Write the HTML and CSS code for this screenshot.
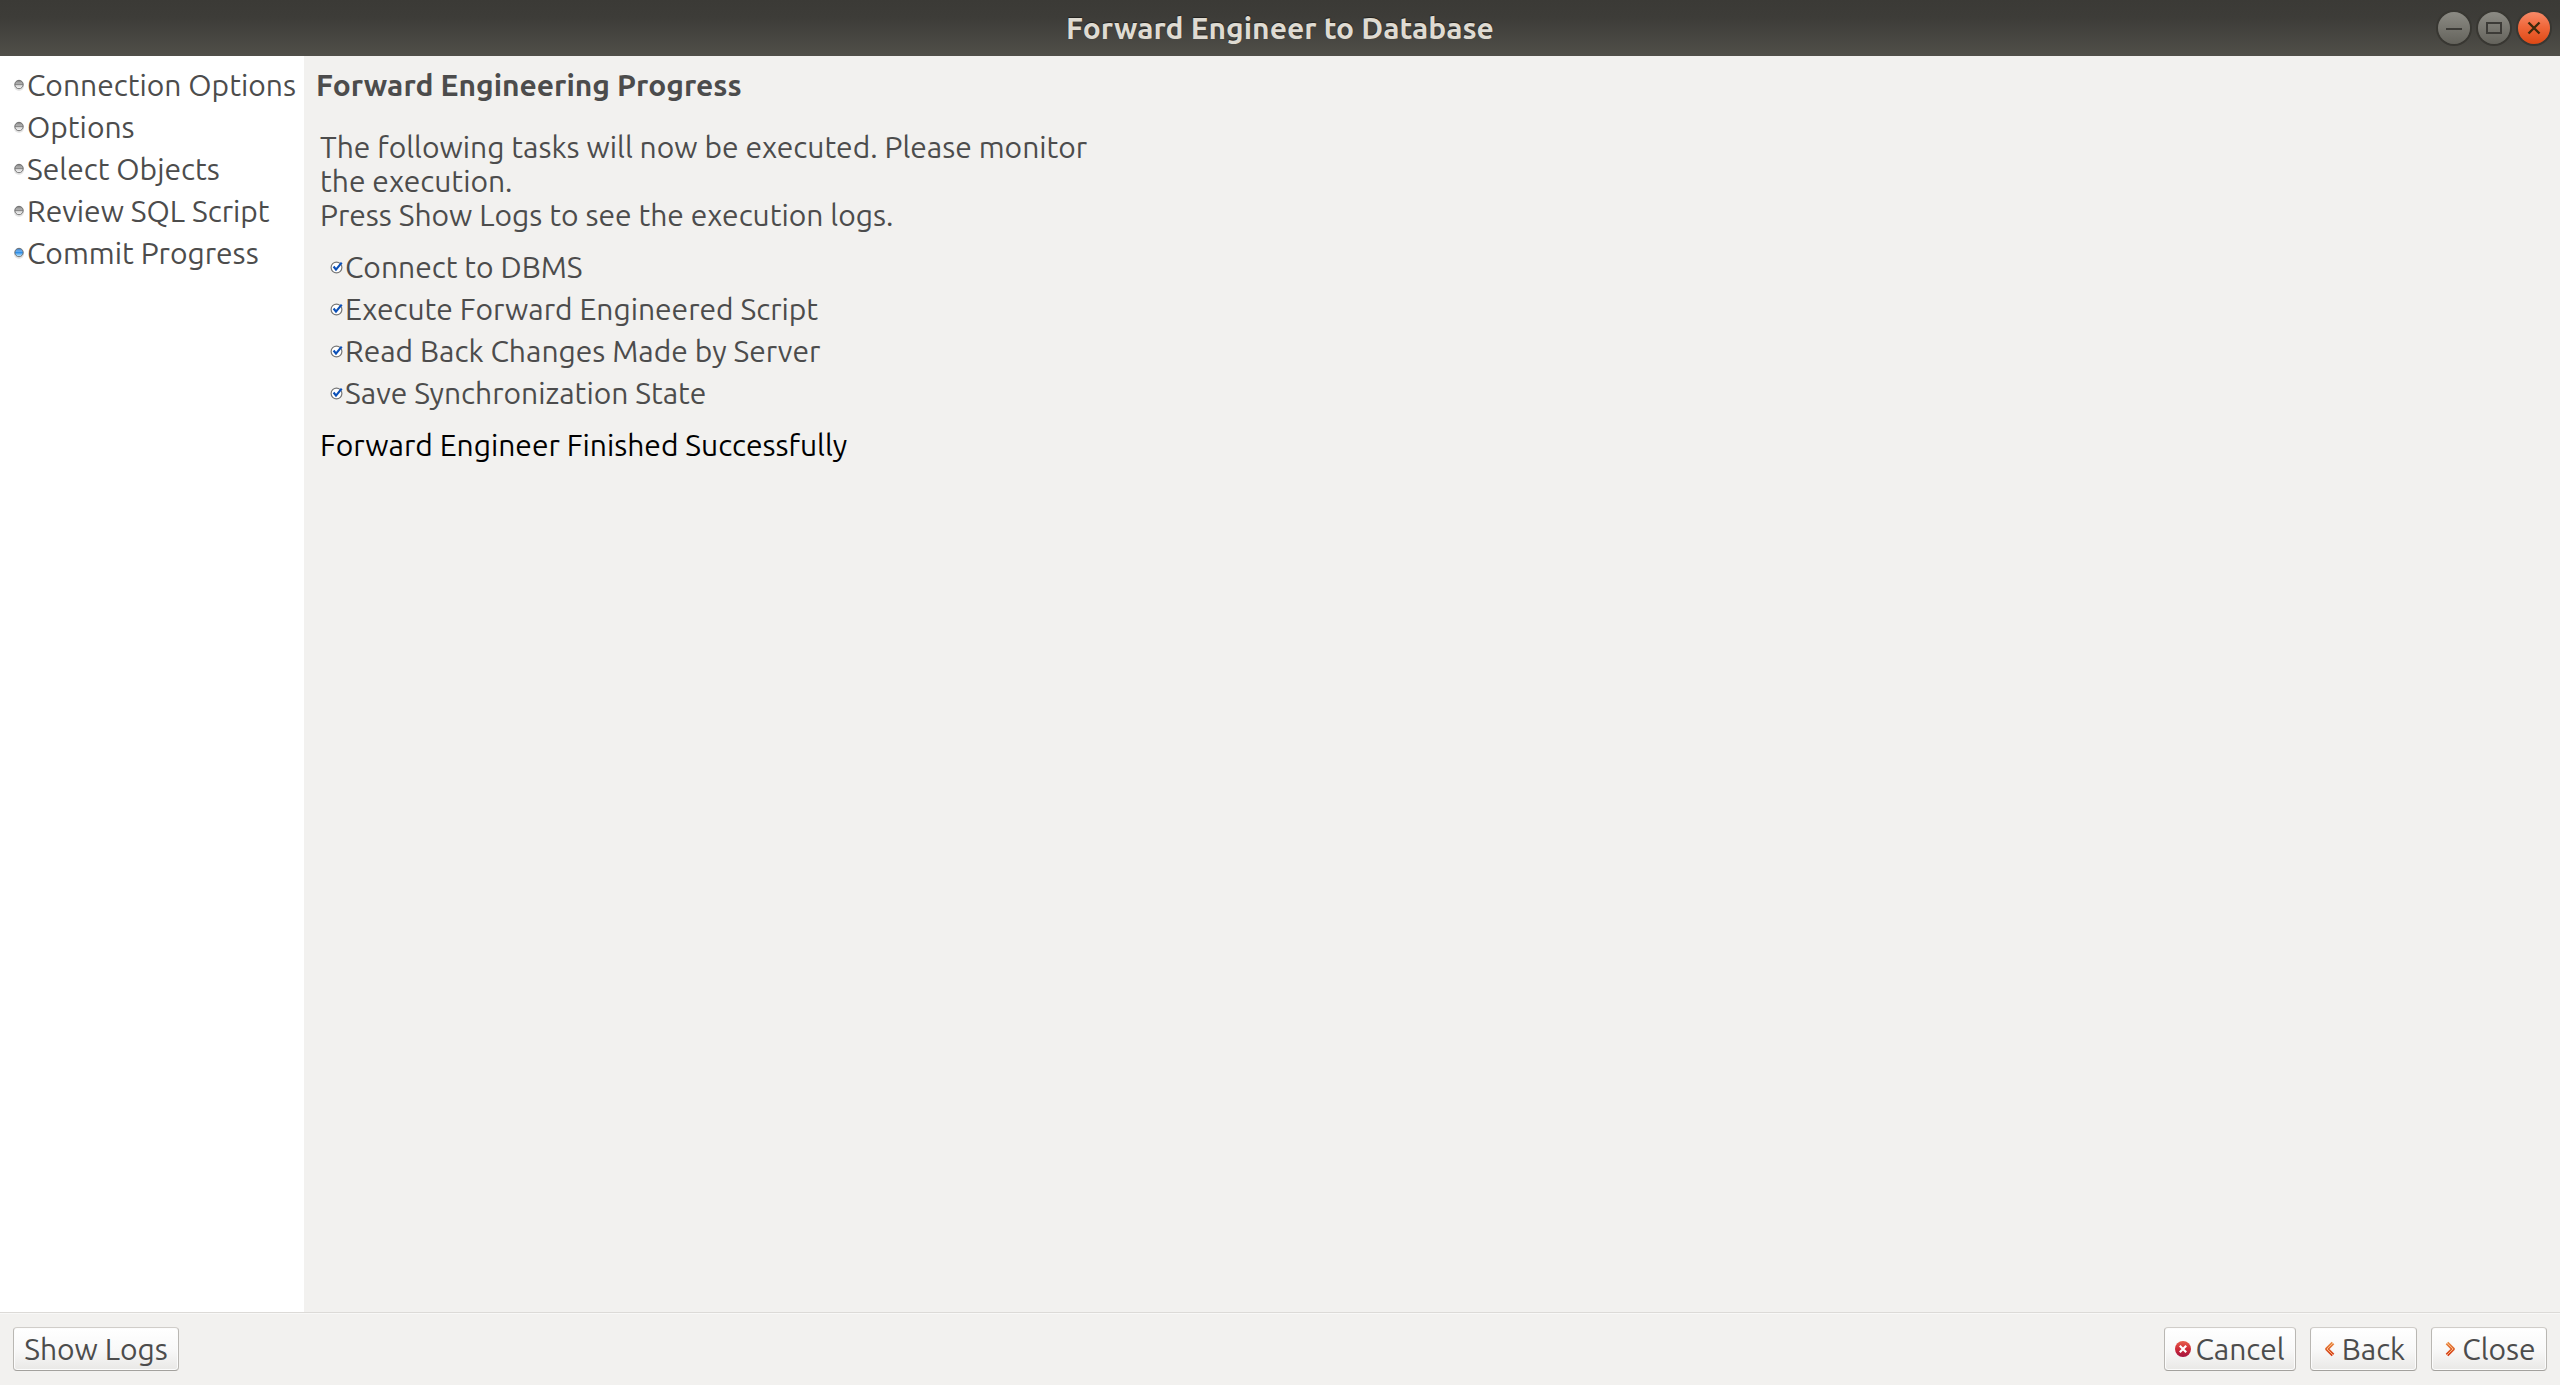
FILE: index.html
```html
<!DOCTYPE html>
<html lang="en">
<head>
<meta charset="utf-8">
<title>Forward Engineer to Database</title>
<link rel="stylesheet" href="styles.css">
</head>
<body>
<svg class="defs" aria-hidden="true">
  <defs>
    <linearGradient id="grey" x1="0" y1="0" x2="0" y2="1"><stop offset="0" stop-color="#777"/><stop offset=".35" stop-color="#b4b4b4"/><stop offset=".5" stop-color="#8a8a8a"/><stop offset=".6" stop-color="#d0d0d0"/><stop offset="1" stop-color="#fff"/></linearGradient>
    <linearGradient id="blue" x1="0" y1="0" x2="0" y2="1"><stop offset="0" stop-color="#3b78bc"/><stop offset=".35" stop-color="#6cb0f0"/><stop offset=".5" stop-color="#2f8fe8"/><stop offset="1" stop-color="#d5f4ff"/></linearGradient>
    <linearGradient id="red" x1="0" y1="0" x2="0" y2="1"><stop offset="0" stop-color="#e8604c"/><stop offset=".5" stop-color="#cf2b38"/><stop offset="1" stop-color="#a31340"/></linearGradient>
    <linearGradient id="orange" x1="0" y1="0" x2="0" y2="1"><stop offset="0" stop-color="#e88a44"/><stop offset="1" stop-color="#d43a16"/></linearGradient>
    <symbol id="dot" viewBox="0 0 10 12"><ellipse cx="5" cy="7" rx="5" ry="5" fill="#000" opacity=".1"/><circle cx="5" cy="5.5" r="4.2" stroke="#6a6a6a" stroke-width=".9"/></symbol>
    <symbol id="check" viewBox="0 0 14 14"><circle cx="6.5" cy="7.5" r="5.4" fill="#fff" stroke="#777" stroke-width="1.2"/><path d="M3.6 6.5 6 9.6 11.7 2.6" fill="none" stroke="#0b50b8" stroke-width="2.2"/></symbol>
  </defs>
</svg>
<header class="titlebar">
  <h1 class="title">Forward Engineer to Database</h1>
  <div class="controls">
    <button class="control" type="button" aria-label="Minimize"><svg viewBox="0 0 32 32" width="32" height="32"><path d="M8 17h16" stroke="#3c3b37" stroke-width="2"/></svg></button>
    <button class="control" type="button" aria-label="Maximize"><svg viewBox="0 0 32 32" width="32" height="32"><path d="M9 11h14v10H9z" fill="none" stroke="#3c3b37" stroke-width="2"/></svg></button>
    <button class="control control-close" type="button" aria-label="Close window"><svg viewBox="0 0 32 32" width="32" height="32"><path d="m10.500 10.500 11 11M21.500 10.500l-11 11" stroke="#3c2a0c" stroke-width="2.400"/></svg></button>
  </div>
</header>
<div class="body">
  <nav class="sidebar">
    <ol class="list">
      <li class="row"><svg class="dot" fill="url(#grey)"><use href="#dot"/></svg>Connection Options</li>
      <li class="row"><svg class="dot" fill="url(#grey)"><use href="#dot"/></svg>Options</li>
      <li class="row"><svg class="dot" fill="url(#grey)"><use href="#dot"/></svg>Select Objects</li>
      <li class="row"><svg class="dot" fill="url(#grey)"><use href="#dot"/></svg>Review SQL Script</li>
      <li class="row" aria-current="step"><svg class="dot" fill="url(#blue)"><use href="#dot"/></svg>Commit Progress</li>
    </ol>
  </nav>
  <main class="content">
    <h2 class="heading">Forward Engineering Progress</h2>
    <div class="progress">
      <p class="intro">The following tasks will now be executed. Please monitor<br>the execution.<br>Press Show Logs to see the execution logs.</p>
      <ul class="list tasks">
        <li class="row"><svg class="check"><use href="#check"/></svg>Connect to DBMS</li>
        <li class="row"><svg class="check"><use href="#check"/></svg>Execute Forward Engineered Script</li>
        <li class="row"><svg class="check"><use href="#check"/></svg>Read Back Changes Made by Server</li>
        <li class="row"><svg class="check"><use href="#check"/></svg>Save Synchronization State</li>
      </ul>
      <p class="result">Forward Engineer Finished Successfully</p>
    </div>
  </main>
</div>
<footer class="footer">
  <button class="button button-logs" type="button">Show Logs</button>
  <div class="actions">
    <button class="button button-cancel" type="button"><svg viewBox="0 0 16 16" width="16" height="16"><circle cx="8" cy="8" r="8" fill="url(#red)"/><path d="m4.8 4.8 6.4 6.4M11.2 4.8l-6.4 6.4" stroke="#fff" stroke-width="2.2"/></svg>Cancel</button>
    <button class="button button-back" type="button"><svg viewBox="0 0 16 16" width="16" height="16"><path d="M11 2 5 8l6 6" fill="none" stroke="url(#orange)" stroke-width="3.8" stroke-linejoin="round"/><path d="M11 2 5 8l6 6" fill="none" stroke="#f9c38c" stroke-width=".9"/></svg>Back</button>
    <button class="button button-close" type="button"><svg viewBox="0 0 16 16" width="16" height="16"><path d="m5 2 6 6-6 6" fill="none" stroke="url(#orange)" stroke-width="3.8" stroke-linejoin="round"/><path d="m5 2 6 6-6 6" fill="none" stroke="#f9c38c" stroke-width=".9"/></svg>Close</button>
  </div>
</footer>
</body>
</html>
```
FILE: styles.css
```css
* { box-sizing: border-box; }

body {
  display: flex;
  flex-direction: column;
  min-height: 100vh;
  margin: 0;
  background: #f2f1ef;
  color: #4c4c4c;
  font: 30px/34px Ubuntu, "Noto Sans", sans-serif;
}

h1, h2, p, ol, ul { margin: 0; padding: 0; }

svg { display: block; flex: none; }

.defs { position: absolute; width: 0; height: 0; }

.titlebar {
  display: grid;
  grid-template-columns: 1fr auto 1fr;
  align-items: center;
  height: 56px;
  padding: 0 10px;
  background: linear-gradient(#3b3a36, #3d3c38 30%, #504f49);
}

.title {
  grid-column: 2;
  color: #dfdbd2;
  font-size: 30px;
  line-height: 34px;
  text-shadow: 0 -1px 1px #22211e;
}

.controls { display: flex; justify-content: flex-end; gap: 8px; }

.control {
  width: 32px;
  height: 32px;
  padding: 0;
  border: 0;
  border-radius: 50%;
  background: linear-gradient(#8c8b84, #64635c);
  box-shadow: 0 0 0 2px #383732;
}

.control-close { background: linear-gradient(#f78a68, #f0683b 45%, #dd4814); }

.body { display: flex; flex: 1; }

.sidebar {
  width: 304px;
  flex: none;
  padding: 8px 0 8px 14px;
  background: #fff;
}

.list { list-style: none; }

.row {
  display: flex;
  align-items: center;
  height: 42px;
  white-space: nowrap;
}

.dot { width: 10px; height: 12px; margin-right: 3px; }

.check { width: 14px; height: 14px; margin-right: 1px; }

.content { flex: 1; padding: 12px; }

.heading { font-size: 30px; line-height: 34px; }

.progress { padding: 28px 4px; }

.tasks { padding: 14px 10px; }

.result { color: #000; }

.footer {
  display: flex;
  justify-content: space-between;
  padding: 14px 13px;
  border-top: 1px solid #dcdad7;
  box-shadow: inset 0 1px #f8f8f7;
}

.actions { display: flex; gap: 14px; }

.button {
  display: flex;
  align-items: center;
  justify-content: center;
  gap: 4px;
  height: 44px;
  padding: 0;
  border: 1px solid #b9b7b3;
  border-top-color: #d0cdc9;
  border-bottom-color: #a3a19d;
  border-radius: 4px;
  background: linear-gradient(#fff, #f9f9f9 50%, #e9e8e6);
  box-shadow: inset 0 0 0 1px #fcfcfc;
  color: #4c4c4c;
  font: inherit;
  white-space: nowrap;
}

.button-logs { width: 166px; }
.button-cancel { width: 132px; }
.button-back { width: 107px; }
.button-close { width: 116px; }
```
